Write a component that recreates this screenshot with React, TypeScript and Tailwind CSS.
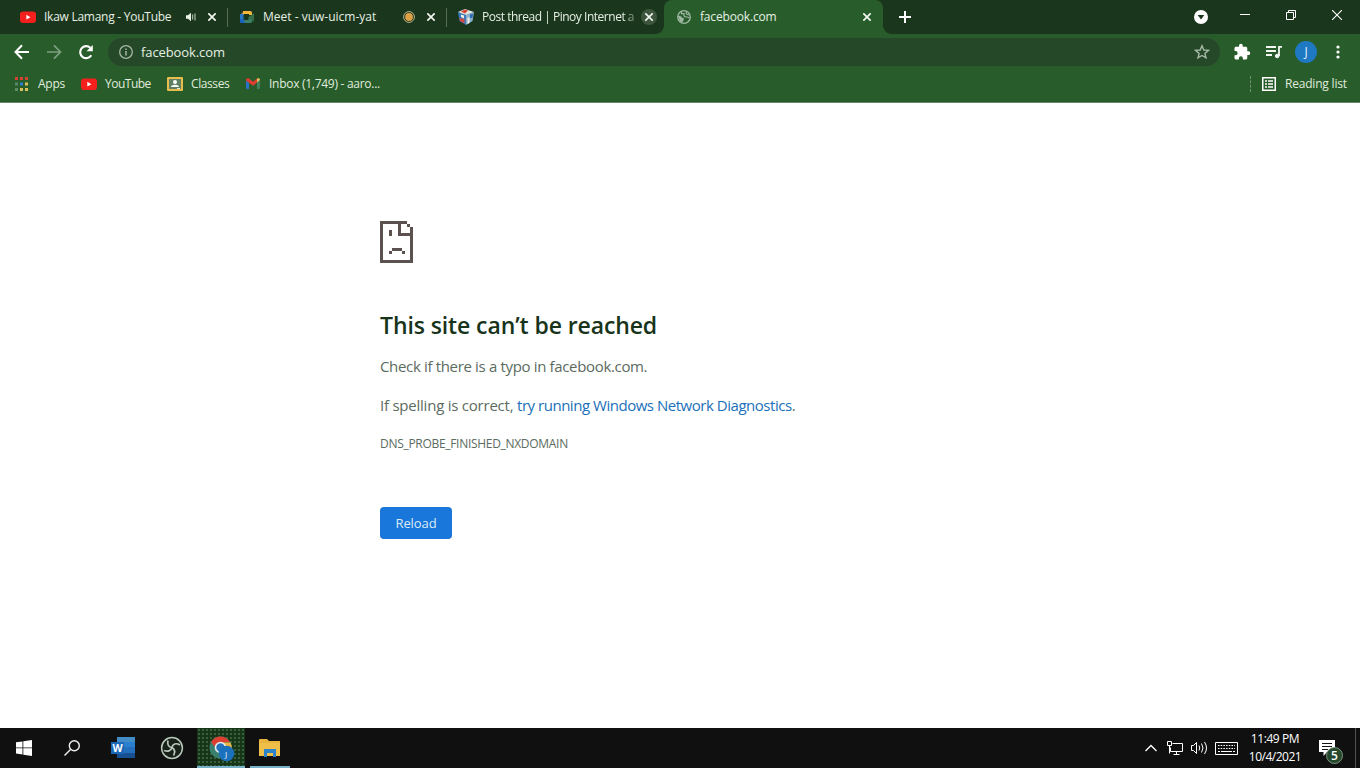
import type { ReactNode } from "react";

interface TabProps {
  icon: ReactNode;
  title: string;
  titleClass: string;
  extra?: ReactNode;
  active?: boolean;
  separator?: boolean;
  hovered?: boolean;
}

function YouTubeIcon() {
  return (
    <svg className="w-4 h-4 shrink-0" viewBox="0 0 16 16">
      <rect x="0" y="2.5" width="16" height="11.5" rx="3" fill="#f3201d" />
      <path d="M6.3 5.8v4.8l4.2-2.4z" fill="#fff" />
    </svg>
  );
}

function MeetIcon() {
  return (
    <svg className="w-4 h-4 shrink-0" viewBox="0 0 16 16">
      <path d="M1 6l4-4v4z" fill="#b9855a" />
      <path d="M4 2h7.500a1.500 1.500 0 011.500 1.500V6H10V5H4z" fill="#f2b63c" />
      <path d="M1 5h3.500v6H1z" fill="#2578c9" />
      <path d="M1 10h4l2 4H2a1 1 0 01-1-1z" fill="#1b64bd" />
      <path d="M5 11h4.500V8L13 6v6.500A1.500 1.500 0 0111.500 14H6z" fill="#3b8067" />
      <path d="M10 8l5-4v9l-5-4z" fill="#376f4a" />
    </svg>
  );
}

function CubeIcon() {
  return (
    <svg className="w-4 h-4 shrink-0" viewBox="0 0 16 16">
      <path d="M0 3l8 3v10l-6.500-4z" fill="#3779bd" />
      <path d="M16 3L8 6v10l6.500-4z" fill="#8eb1cd" />
      <path d="M0 3l7-3 9 3-8 3z" fill="#dfe6e6" />
      <path d="M3 2.500L7 .5l3 1-3 3z" fill="#dc402e" />
      <path d="M1.500 9l5 1v4.500L2 12z" fill="#cf4b45" />
      <path d="M3 5.500l3 1v3L3 8zM9.500 9l2-.8V14l-2 1z" fill="#f1eee8" />
      <path d="M12 5.500l3-1-.5 4L12 9.500z" fill="#2d6bb0" />
    </svg>
  );
}

function GlobeIcon() {
  return (
    <svg className="w-3.5 h-3.5 shrink-0" viewBox="0 0 14 14" fill="none" stroke="#9fb8a2">
      <circle cx="7" cy="7" r="6.300" strokeWidth="1.300" />
      <path d="M1 6h2.500l1.500 2h1.500v2L5 12.500l-2-1.500z" fill="#9fb8a2" strokeWidth=".4" />
      <path d="M4.500 1.500v2.200H7V6l1.500 1h2l2 1M9 1.500l.5 2.500 2.500 1" strokeWidth="1.200" />
    </svg>
  );
}

function SpeakerIcon() {
  return (
    <svg className="w-2.5 h-2.5 mr-[8px] shrink-0" viewBox="0 0 10 10">
      <path d="M0 3.300h2L5 .7v8.600L2 6.700H0z" fill="#e9f2e7" />
      <path d="M6.700 2.500v5M9 1.500v7" stroke="#c3d2c3" strokeWidth="1" />
    </svg>
  );
}

function RecordIcon() {
  return (
    <svg className="w-3 h-3 mr-[8px] shrink-0" viewBox="0 0 12 12">
      <circle cx="6" cy="6" r="5.400" fill="none" stroke="#b9b48a" strokeWidth="1" />
      <circle cx="6" cy="6" r="3.900" fill="#dda046" />
    </svg>
  );
}

function CloseIcon() {
  return (
    <svg className="w-2 h-2" viewBox="0 0 8 8" stroke="#f1f7f0" strokeWidth="1.700">
      <path d="M.3.3l7.400 7.400M7.700.3L.3 7.700" />
    </svg>
  );
}

function Tab({ icon, title, titleClass, extra, active, separator, hovered }: TabProps) {
  return (
    <div
      className={
        active
          ? "relative flex items-center w-[219px] h-[34px] -ml-px pl-[13px] pr-2 rounded-t-[8px] bg-[#285d2b]"
          : hovered
            ? "relative flex items-center w-[219px] h-[34px] pl-3 pr-2"
            : "relative flex items-center w-[219px] h-[34px] pl-3 pr-[7px]"
      }
    >
      {active && (
        <>
          <span className="absolute bottom-0 -left-2 w-2 h-2 bg-[radial-gradient(circle_at_0_0,#1a361c_7.5px,#285d2b_8px)]" />
          <span className="absolute bottom-0 -right-2 w-2 h-2 bg-[radial-gradient(circle_at_100%_0,#1a361c_7.5px,#285d2b_8px)]" />
        </>
      )}
      {icon}
      <span className={`flex-1 ml-2 overflow-hidden whitespace-nowrap ${titleClass}`}>{title}</span>
      {extra}
      <span
        className={
          hovered
            ? "flex items-center justify-center w-4 h-4 rounded-full bg-[#3e563d]"
            : "flex items-center justify-center w-4 h-4"
        }
      >
        <CloseIcon />
      </span>
      {separator && <span className="absolute -right-px top-2 w-px h-[19px] bg-[#566e56]" />}
    </div>
  );
}

function TabStrip() {
  return (
    <div className="flex h-[34px] bg-[#1a361c] text-[12px] text-[#e6efe4]">
      <div className="flex pl-[8px]">
        <Tab icon={<YouTubeIcon />} title="Ikaw Lamang - YouTube" titleClass="tracking-[-0.26px]" extra={<SpeakerIcon />} separator />
        <Tab icon={<MeetIcon />} title="Meet - vuw-uicm-yat" titleClass="tracking-[0px]" extra={<RecordIcon />} separator />
        <Tab
          icon={<CubeIcon />}
          title="Post thread | Pinoy Internet a"
          titleClass="tracking-[-0.48px] mr-[6px] [mask-image:linear-gradient(to_right,#000_92%,transparent_104%)]"
          hovered
        />
        <Tab icon={<GlobeIcon />} title="facebook.com" titleClass="ml-[9px] tracking-[-0.17px]" active />
      </div>
      <svg className="w-3 h-3 ml-[16px] mt-[11px]" viewBox="0 0 12 12" stroke="#fff" strokeWidth="2">
        <path d="M6 0v12M0 6h12" />
      </svg>
      <div className="flex ml-auto">
        <svg className="w-3.5 h-3.5 mt-[10px] mr-[14px]" viewBox="0 0 14 14">
          <circle cx="7" cy="7" r="7" fill="#fff" />
          <path d="M3.700 5h6.600L7 9.500z" fill="#1a361c" />
        </svg>
        <div className="flex w-[46px] h-[29px] items-center justify-center">
          <div className="w-[10px] h-px bg-white" />
        </div>
        <div className="flex w-[46px] h-[29px] items-center justify-center">
          <svg className="w-[10px] h-[10px]" viewBox="0 0 10 10" fill="none" stroke="#fff">
            <path d="M.5 2.500h7v7h-7zM2.500 2.500v-2h7v7h-2" />
          </svg>
        </div>
        <div className="flex w-[46px] h-[29px] items-center justify-center">
          <svg className="w-[10px] h-[10px]" viewBox="0 0 10 10" stroke="#fff" strokeWidth="1.100">
            <path d="M0 0l10 10M10 0L0 10" />
          </svg>
        </div>
      </div>
    </div>
  );
}

function Toolbar() {
  return (
    <div className="flex items-center h-9 bg-[#285d2b]">
      <svg className="w-4 h-4 ml-[14px]" viewBox="0 0 16 16" fill="none" stroke="#fff" strokeWidth="2">
        <path d="M15 8H2M8 1.300L1.500 8 8 14.700" />
      </svg>
      <svg className="w-4 h-4 ml-4" viewBox="0 0 16 16" fill="none" stroke="#7f9f80" strokeWidth="1.700">
        <path d="M1 8h13M8 1.300L14.500 8 8 14.700" />
      </svg>
      <svg className="w-4 h-4 ml-4" viewBox="0 0 16 16">
        <path d="M13.300 11.300A6 6 0 1112.300 3.800" fill="none" stroke="#fff" strokeWidth="2.200" />
        <path d="M14.800 1v6.300H8.500z" fill="#fff" />
      </svg>
      <div className="flex items-center w-[1112px] h-7 ml-[14px] pl-[11px] pr-[10px] rounded-full bg-[#254829]">
        <svg className="w-3.5 h-3.5" viewBox="0 0 14 14" fill="none" stroke="#a7b8a6">
          <circle cx="7" cy="7" r="6.300" strokeWidth="1.300" />
          <path d="M7 6v4.500M7 3.500V5" strokeWidth="1.500" />
        </svg>
        <span className="pt-0.5 ml-2 text-[13px] tracking-[-0.1px] text-[#e6efe4]">facebook.com</span>
        <svg className="w-4 h-4 ml-auto" viewBox="0 0 16 16" fill="none" stroke="#a5b8a5" strokeWidth="1.400">
          <path d="M8 1.800l1.800 4.200 4.600.4-3.500 3 1.100 4.500L8 11.500l-4 2.400 1.100-4.500-3.500-3L6.200 6z" />
        </svg>
      </div>
      <svg className="w-[18px] h-[18px] ml-[13px]" viewBox="0 0 24 24" fill="#fff">
        <path d="M20.500 11H19V7c0-1.100-.9-2-2-2h-4V3.500a2.500 2.500 0 00-5 0V5H4c-1.100 0-2 .9-2 2v3.800h1.500a2.700 2.700 0 010 5.400H2V20c0 1.100.9 2 2 2h3.800v-1.500a2.700 2.700 0 015.400 0V22H17c1.100 0 2-.9 2-2v-4h1.500a2.500 2.500 0 000-5z" />
      </svg>
      <svg className="w-4 h-3.5 ml-[15px]" viewBox="0 0 16 14" fill="none" stroke="#f3f8f2" strokeWidth="1.800">
        <path d="M0 2h10M0 6h10M0 10h6M13 11V1.900h3" />
        <circle cx="11.200" cy="11" r="1.800" fill="#f3f8f2" strokeWidth="1" />
      </svg>
      <div className="flex items-center justify-center w-[22px] h-[22px] ml-[13px] rounded-full bg-[#1f78c2] text-[12px] text-[#e4f0f8]">
        J
      </div>
      <svg className="w-1 h-3.5 ml-[19px]" viewBox="0 0 4 14" fill="#fff">
        <circle cx="2" cy="2" r="1.600" />
        <circle cx="2" cy="7" r="1.600" />
        <circle cx="2" cy="12" r="1.600" />
      </svg>
    </div>
  );
}

function BookmarksBar() {
  return (
    <div className="flex items-center h-[33px] pb-[5px] pl-[15px] pr-[14px] border-b border-[#65886a] bg-[#285d2b] text-[12px] text-[#e0ebde]">
      <svg className="w-[13px] h-3.5" viewBox="0 0 13 14">
        <path d="M0 0h3v3H0zM5 0h3v3H5zM10 0h3v3h-3z" fill="#d94333" />
        <path d="M0 5.500h3v3H0z" fill="#56876a" />
        <path d="M5 5.500h3v3H5z" fill="#2a7dcc" />
        <path d="M10 5.500h3v3h-3z" fill="#dcc05b" />
        <path d="M0 11h3v3H0z" fill="#5d8b68" />
        <path d="M5 11h3v3H5zM10 11h3v3h-3z" fill="#dcc05b" />
      </svg>
      <span className="w-[43px] pl-[10px] whitespace-nowrap tracking-[-0.25px]">Apps</span>
      <span className="pl-[10px]"><YouTubeIcon /></span>
      <span className="w-[62px] pl-[8px] whitespace-nowrap tracking-[-0.5px]">YouTube</span>
      <svg className="w-4 h-3.5 ml-[8px]" viewBox="0 0 16 14">
        <rect width="16" height="14" rx="1" fill="#e8bd4d" />
        <path d="M2 2h12v10H2z" fill="#5d8063" />
        <circle cx="8" cy="5" r="2" fill="#fff" />
        <path d="M4 10c0-3 8-3 8 0z" fill="#fff" />
        <path d="M10 11h3v1h-3z" fill="#e7efe3" />
      </svg>
      <span className="w-[63px] pl-[8px] whitespace-nowrap tracking-[-0.4px]">Classes</span>
      <svg className="w-3.5 h-[11px]" viewBox="0 0 14 11">
        <path d="M0 2l3 2.200V11H1a1 1 0 01-1-1z" fill="#2972c7" />
        <path d="M14 2l-3 2.200V11h2a1 1 0 001-1z" fill="#3d815d" />
        <path d="M0 2C0 0 2-.2 3 .6l4 3.200 4-3.200v4L7 7.700 0 2.500z" fill="#df3c31" />
        <path d="M11 .6c1-.8 3-.6 3 1.400l-3 2.500z" fill="#e9bb5b" />
      </svg>
      <span className="ml-[9px] tracking-[-0.28px]">Inbox (1,749) - aaro...</span>
      <div className="ml-auto mr-[11px] h-4 border-l border-dashed border-[#739275]" />
      <svg className="w-3.5 h-3.5" viewBox="0 0 14 14" fill="none" stroke="#fff">
        <path d="M.75.75h12.500v12.500H.75z" strokeWidth="1.500" />
        <path d="M3 4h2M6 4h5M3 7h2M6 7h5M3 10h2M6 10h5" strokeWidth="1.500" />
      </svg>
      <span className="w-[62px] ml-[9px] -mr-px whitespace-nowrap tracking-[-0.2px]">Reading list</span>
    </div>
  );
}

function ErrorPage() {
  return (
    <main className="flex-1 flex flex-col items-start pl-[380px] pt-[118px] bg-white text-[#5b6b60]">
      <svg className="w-[33px] h-[42px]" viewBox="0 0 33 42" fill="#5b514f" shapeRendering="crispEdges">
        <path d="M0 0h27v3H21v9h12v3H18V3H3v36h27V6h3v36H0zM27 3h3v3h-3zM9 9h3v6H9zM12 27h10v3H12zM9 30h3v3H9zM22 30h3v3h-3z" />
      </svg>
      <h1 className="mt-[46px] leading-8 text-[23px] font-semibold tracking-[-0.1px] text-[#17341b]">This site can’t be reached</h1>
      <p className="mt-[13px] leading-6 text-[15px] tracking-[-0.34px]">Check if there is a typo in facebook.com.</p>
      <p className="mt-[15px] leading-6 text-[15px] tracking-[-0.23px]">
        If spelling is correct, <a className="tracking-[-0.47px] text-[#1b70b9]">try running Windows Network Diagnostics</a>.
      </p>
      <p className="mt-[17px] leading-5 text-[12px] tracking-[-0.3px]">DNS_PROBE_FINISHED_NXDOMAIN</p>
      <button className="mt-[53px] w-[72px] h-8 pt-0.5 rounded bg-[#1976da] text-[13px] tracking-[-0.1px] text-[#dcecf8]">Reload</button>
    </main>
  );
}

function Taskbar() {
  return (
    <footer className="flex h-10 bg-[#101010] text-[12px] text-white">
      <div className="flex items-center justify-center w-12">
        <svg className="w-4 h-4" viewBox="0 0 16 16" fill="#fff">
          <path d="M0 2.300l6.500-.9v6.100H0zM7.300 1.300L16 0v7.500H7.300zM0 8.300h6.500v6.200L0 13.600zM7.300 8.300H16V16l-8.700-1.300z" />
        </svg>
      </div>
      <div className="flex items-center justify-center w-12">
        <svg className="w-4 h-4" viewBox="0 0 16 16" fill="none" stroke="#eef2ee" strokeWidth="1.400">
          <circle cx="10.300" cy="5.700" r="5" />
          <path d="M6.500 9.500L.5 15.500" />
        </svg>
      </div>
      <div className="flex items-center justify-center w-[53px]">
        <svg className="w-6 h-[22px]" viewBox="0 0 24 22">
          <path d="M6 0h18v21H6z" fill="#236fbd" />
          <path d="M6 0h18v5H6z" fill="#438dc7" />
          <path d="M6 5h18v5H6z" fill="#2b7fd0" />
          <path d="M6 16h18v5H6z" fill="#174f91" />
          <path d="M0 5h13v12H0z" fill="#1b68b7" />
          <text x="1.500" y="15" fontSize="10.500" fontWeight="700" fill="#fff" fontFamily="Open Sans, sans-serif">W</text>
        </svg>
      </div>
      <div className="flex items-center justify-center w-12 -ml-px">
        <svg className="w-6 h-6" viewBox="0 0 24 24" fill="none" stroke="#b7c7b9">
          <circle cx="12" cy="12" r="10.400" fill="#172019" strokeWidth="1.500" />
          <path d="M8 4.500c-1 4 .5 6.500 4 7M12 11.500c.5-3.500 4-5 8-2.500M12 11.500c3 2 3.500 4.500 1.500 8M12 11.500c-1 3.500-4.500 4.500-8 3" strokeWidth="1.700" />
        </svg>
      </div>
      <div className="relative flex items-center justify-center w-12 ml-px bg-[#173619] bg-[radial-gradient(#386039_0.8px,transparent_1px)] bg-[length:4px_4px]">
        <svg className="w-[26px] h-[26px] ml-0.5 mt-0.5" viewBox="0 0 26 26">
          <circle cx="11.500" cy="11.500" r="11" fill="#3b806d" />
          <path d="M2 6a11 11 0 0119 0l-9 1-5 5z" fill="#dc3e31" />
          <path d="M12 6.500h9.500a11 11 0 01-6 15.500L17 13z" fill="#e7b543" />
          <circle cx="11.500" cy="11.500" r="5" fill="#2473bd" stroke="#e8efed" strokeWidth="1.600" />
          <circle cx="17.500" cy="17.500" r="7.800" fill="#1c71bc" />
          <text x="16" y="21" fontSize="8" fill="#fff" fontFamily="Open Sans, sans-serif">J</text>
        </svg>
        <span className="absolute inset-x-0 bottom-0 h-0.5 bg-[#76b0c9]" />
      </div>
      <div className="relative flex items-center justify-center w-10 ml-[5px]">
        <svg className="w-[22px] h-[18px]" viewBox="0 0 22 18">
          <path d="M0 1a1 1 0 011-1h7l2 2h11v15H0z" fill="#e9b43e" />
          <path d="M0 4h21v13H0z" fill="#f0bf49" />
          <path d="M5 10h12v8h-3v-4H8v4H5z" fill="#2b84cb" />
        </svg>
        <span className="absolute inset-x-0 bottom-0 h-0.5 bg-[#76b0c9]" />
      </div>
      <div className="flex items-center ml-auto">
        <svg className="w-3 h-2" viewBox="0 0 12 8" fill="none" stroke="#fff" strokeWidth="1.300">
          <path d="M.5 7L6 1.500 11.500 7" />
        </svg>
        <svg className="w-4 h-[14px] ml-[10px]" viewBox="0 0 16 14" fill="none" stroke="#fff">
          <path d="M5.500 2.500h10v8h-12v-4M.5.500h4v4h-4zM2.500 4.500v8M9.500 10.500v3M6.500 13.500h6" />
        </svg>
        <svg className="w-[17px] h-[14px] ml-[8px]" viewBox="0 0 17 14" fill="none" stroke="#fff">
          <path d="M.5 4.500h2l3-3v11l-3-3h-2z" />
          <path d="M8 4.500q1.500 2.500 0 5M10.500 2.500q3 4.500 0 9M13.500 1q4 6 0 12" />
        </svg>
        <svg className="w-[23px] h-[13px] ml-[7px]" viewBox="0 0 23 13" fill="none" stroke="#fff">
          <path d="M.5.500h22v12H.5z" />
          <path d="M3 3.500h17M3 6.500h17" strokeDasharray="1.500 1.200" />
          <path d="M3 9.500h2M6 9.500h11M18 9.500h2" />
        </svg>
        <div className="flex flex-col items-center w-[74px] leading-[18px] whitespace-nowrap">
          <span className="tracking-[-0.4px]">11:49 PM</span>
          <span className="tracking-[-0.5px]">10/4/2021</span>
        </div>
        <div className="relative w-[27px] h-10 ml-[7px]">
          <svg className="w-4 h-[17px] mt-[12px]" viewBox="0 0 16 17">
            <path d="M0 0h16v12H8l-3.500 4V12H0z" fill="#fff" />
            <path d="M3 3.500h10M3 6.500h10M3 9.500h6" stroke="#101010" />
          </svg>
          <span className="absolute left-[7px] top-[19px] flex items-center justify-center w-[17px] h-[17px] rounded-full border border-[#7c967f] bg-[#25472b] text-[12px] font-semibold">
            5
          </span>
        </div>
        <div className="w-px h-10 ml-[9px] mr-1 bg-[#4d554e]" />
      </div>
    </footer>
  );
}

export default function App() {
  return (
    <div className="flex flex-col w-[1360px] h-[768px] overflow-hidden font-['Open_Sans','Noto_Sans',sans-serif]">
      <TabStrip />
      <Toolbar />
      <BookmarksBar />
      <ErrorPage />
      <Taskbar />
    </div>
  );
}
